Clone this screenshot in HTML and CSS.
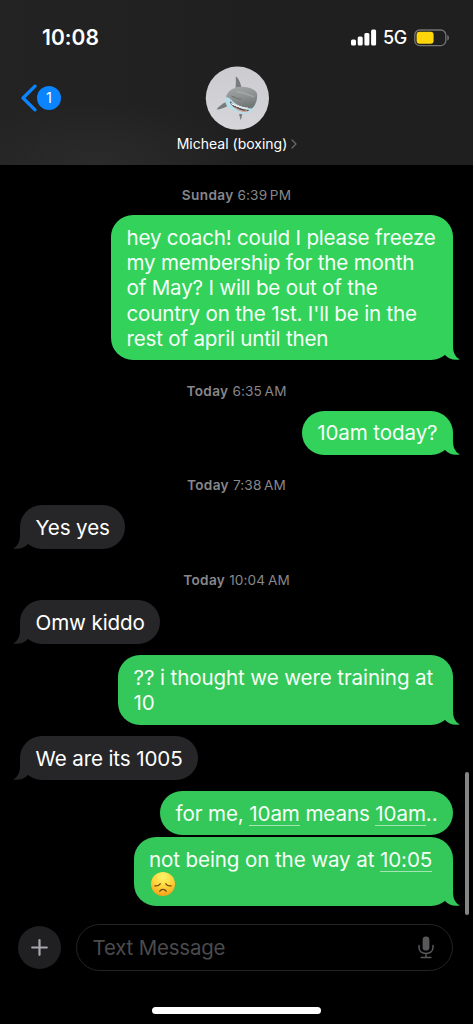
FILE: index.html
```html
<!DOCTYPE html>
<html lang="en">
<head>
<meta charset="utf-8">
<title>Messages</title>
<link rel="stylesheet" href="styles.css">
</head>
<body>
<svg class="defs" width="0" height="0">
  <symbol id="tail" viewBox="0 0 25 24"><path d="M6 8 L18 2 V10 C18 17 20.5 21.5 25 23.2 C19 25 13.5 22.5 10 19 Z"/></symbol>
</svg>
<div class="phone">
  <header class="header">
    <div class="status">
      <span class="clock">10:08</span>
      <div class="status-right">
        <svg class="signal" width="26" height="17" viewBox="0 0 26 17" fill="#fff"><rect x="0" y="10.5" width="5" height="6" rx="1.5"/><rect x="6.7" y="7.5" width="5" height="9" rx="1.5"/><rect x="13.4" y="4" width="5" height="12.5" rx="1.5"/><rect x="20.1" y="0.5" width="5" height="16" rx="1.5"/></svg>
        <span class="network">5G</span>
        <svg class="battery" width="36" height="18" viewBox="0 0 36 18"><rect x=".8" y="1" width="31" height="15.6" rx="5" fill="none" stroke="#737373" stroke-width="1.3"/><rect x="2.6" y="2.8" width="17" height="12" rx="3" fill="#ffd60a"/><path d="M33.3 6c2.2.8 2.2 4.8 0 5.6z" fill="#737373"/></svg>
      </div>
    </div>
    <div class="nav">
      <div class="back">
        <svg width="16" height="28" viewBox="0 0 16 28" fill="none" stroke="#0a84ff" stroke-width="3.3" stroke-linecap="round" stroke-linejoin="round"><path d="M14 2.2 2.1 14 14 25.8"/></svg>
        <span class="unread">1</span>
      </div>
      <div class="contact">
        <svg class="avatar" width="64" height="64" viewBox="0 0 64 64">
          <defs>
            <linearGradient id="bg" x2="0" y2="1"><stop stop-color="#cbcbd0"/><stop offset="1" stop-color="#d6d6da"/></linearGradient>
            <linearGradient id="skin" x2=".3" y2="1"><stop stop-color="#a5a8a9"/><stop offset=".6" stop-color="#8b8f8f"/><stop offset="1" stop-color="#727777"/></linearGradient>
          </defs>
          <circle cx="32.4" cy="32.2" r="31.6" fill="url(#bg)"/>
          <path d="M21 36 C17 38 13.5 40.5 11.5 43.5 C15 43.3 19 42 22 40.5 Z" fill="#777d7f"/>
          <path d="M34 48 L35.8 54.5 L37.3 48 Z" fill="#777d7f"/>
          <path d="M30.5 22 C31 18 31 13.5 30.7 10.5 C33.5 12 35.3 16 36.3 21 Z" fill="#777b7c"/>
          <path d="M20.5 33 C21 27 27 21.5 37 21 C45 21.5 52 24 52.2 28.5 C52.5 36 49 43 44.5 47 C36 49 24 44 20.5 37 Z" fill="#b5dee8"/>
          <path d="M21 31.5 C22 25 29 20.5 38 20.8 C45 21.3 52 24 52.2 28.5 C52.5 35 50 39.5 47 42.5 C38 42.5 31 39 26 33.5 C24 31.7 22.5 31 21 31.5 Z" fill="url(#skin)"/>
          <path d="M25 34.7 C30 40.5 37 43.3 44.5 44.2 C39 47.8 29 43 25.5 37.5 Z" fill="#5b4c50"/>
          <path d="M26.5 37 l1 1.5 1-.6 1 1.7 1.3-.6 1 1.6 1.5-.7 1.2 1.5 1.6-.8 1.2 1.3 1.7-.6 1.2 1 2.6-.5" fill="none" stroke="#f1efed" stroke-width="1.1"/>
          <path d="M30 41.7 C34 44.5 38 46 42 45" fill="none" stroke="#d7a699" stroke-width="1.3"/>
          <path d="M26.5 30 C30 31.5 33 33.5 36 33" fill="none" stroke="#666b6d" stroke-width=".9"/>
          <path d="M32 26 C38 26 44 29 49 31" fill="none" stroke="#bdbfbf" stroke-width="1.6" opacity=".45"/>
        </svg>
        <div class="name"><span>Micheal (boxing)</span><svg width="6" height="10" viewBox="0 0 6 10" fill="none" stroke="#68686c" stroke-width="1.3" stroke-linecap="round" stroke-linejoin="round"><path d="M1 1l4 4-4 4"/></svg></div>
      </div>
    </div>
  </header>

  <main class="thread">
    <div class="stamp first"><b>Sunday</b> 6:39&#8201;PM</div>
    <div class="bubble sent fresh long">hey coach! could I please freeze<br>my membership for the month<br>of May? I will be out of the<br>country on the 1st. I'll be in the<br>rest of april until then<svg class="tail"><use href="#tail"/></svg></div>
    <div class="stamp"><b>Today</b> 6:35&#8201;AM</div>
    <div class="bubble sent fresh">10am today?<svg class="tail"><use href="#tail"/></svg></div>
    <div class="stamp"><b>Today</b> 7:38&#8201;AM</div>
    <div class="bubble received">Yes yes<svg class="tail"><use href="#tail"/></svg></div>
    <div class="stamp"><b>Today</b> 10:04&#8201;AM</div>
    <div class="bubble received">Omw kiddo<svg class="tail"><use href="#tail"/></svg></div>
    <div class="bubble sent reply question">?? i thought we were training at<br>10<svg class="tail"><use href="#tail"/></svg></div>
    <div class="bubble received reply">We are its 1005<svg class="tail"><use href="#tail"/></svg></div>
    <div class="bubble sent reply">for me, <span class="link">10am</span> means <span class="link">10am</span>..</div>
    <div class="bubble sent grouped">not being on the way at <span class="link">10:05</span><br><svg class="emoji" width="26" height="26" viewBox="0 0 26 26"><defs><radialGradient id="face" cx=".5" cy=".2" r=".85"><stop stop-color="#fff36b"/><stop offset=".5" stop-color="#ffd43a"/><stop offset="1" stop-color="#f59a14"/></radialGradient></defs><circle cx="13" cy="13" r="12" fill="url(#face)"/><path d="M4.8 14.8c2.3.5 4.2-.2 5.4-2M21.2 14.8c-2.3.5-4.2-.2-5.4-2M9.8 20.2c1.5-2.5 4.9-2.5 6.4 0" fill="none" stroke="#76450d" stroke-width="1.3" stroke-linecap="round"/></svg><svg class="tail"><use href="#tail"/></svg></div>
    <div class="scrollbar"></div>
  </main>

  <footer class="composer">
    <div class="add"><svg width="17" height="17" viewBox="0 0 17 17" stroke="#a9a9ad" stroke-width="2.2" stroke-linecap="round"><path d="M8.5 1.2v14.6M1.2 8.5h14.6"/></svg></div>
    <div class="field"><span>Text Message</span><svg width="16" height="23" viewBox="0 0 16 23" fill="none" stroke="#58585b" stroke-width="1.5" stroke-linecap="round"><rect x="4.6" y=".6" width="6.8" height="14" rx="3.4" fill="#58585b" stroke="none"/><path d="M1 9.5v1.8c0 4 3 6.2 7 6.2s7-2.2 7-6.2V9.5M8 17.5v3.7M3.2 21.4h9.6"/></svg></div>
  </footer>
  <div class="home"></div>
</div>
</body>
</html>
```
FILE: styles.css
```css
* { box-sizing: border-box; }
body { margin: 0; background: #000; font-family: Inter, "Liberation Sans", sans-serif; }
.defs { position: absolute; }
.phone { width: 473px; height: 1024px; background: #000; overflow: hidden; display: flex; flex-direction: column; }
svg { display: block; flex: none; }

.header { height: 164.6px; flex: none; background: radial-gradient(ellipse 150px 65px at 95px 165px, #2b2b2b, transparent), linear-gradient(90deg, #232323, #1f1f1f 60%); }
.status { height: 66px; padding: 9px 23px 0 42px; display: flex; justify-content: space-between; align-items: center; color: #fff; }
.clock { font-size: 21px; font-weight: 600; letter-spacing: .05px; }
.status-right { display: flex; align-items: center; }
.network { font-size: 18px; font-weight: 500; margin: 0 7px 0 6px; letter-spacing: -.3px; }
.nav { display: grid; grid-template-columns: 1fr auto 1fr; padding: 0 20px 0 21px; }
.back { display: flex; align-items: center; align-self: start; margin-top: 18px; }
.unread { width: 24px; height: 24px; border-radius: 50%; background: #0a84ff; color: #fff; font-size: 14.5px; line-height: 24px; text-align: center; }
.contact { display: flex; flex-direction: column; align-items: center; }
.name { display: flex; align-items: center; gap: 4px; margin-top: 5px; color: #fff; font-size: 14px; line-height: 18px; letter-spacing: 0; }

.thread { position: relative; flex: none; height: 742px; display: flex; flex-direction: column; }
.stamp { height: 16px; margin: 22.5px 0 12px; line-height: 16px; text-align: center; color: #87878c; font-size: 13.6px; font-weight: 400; letter-spacing: .15px; }
.stamp b { font-weight: 600; letter-spacing: .35px; }
.bubble { position: relative; flex: none; padding: 9.9px 15.5px 9.1px; border-radius: 22px; font-size: 20.6px; line-height: 25.2px; letter-spacing: -.12px; color: #fff; white-space: nowrap; }
.sent { align-self: flex-end; margin-right: 20px; background: #34c759; color: #f5fff7; fill: #34c759; }
.fresh { background: #32d25b; fill: #32d25b; }
.long { width: 342px; letter-spacing: -.2px; }
.question { width: 335px; }
.grouped { width: 319.5px; }
.received { align-self: flex-start; margin-left: 20px; background: #262628; fill: #262628; }
.reply { margin-top: 11.2px; }
.grouped { margin-top: 1.2px; }
.tail { position: absolute; right: -7px; bottom: 0; width: 25px; height: 24px; }
.received .tail { right: auto; left: -7px; transform: scaleX(-1); }
.link { box-shadow: 0 1px 0 #a4e5b3; display: inline-block; height: 24px; }
.emoji { margin: -.5px 0 -.3px 1px; }
.scrollbar { position: absolute; right: 4px; top: 607px; width: 4px; height: 143px; border-radius: 2px; background: #858585; }

.composer { display: flex; align-items: center; margin-top: 17.6px; padding: 0 20px 0 17.5px; height: 47px; flex: none; }
.add { width: 43px; height: 43px; border-radius: 50%; background: #202022; display: flex; align-items: center; justify-content: center; }
.field { margin-left: 15px; flex: 1; height: 47px; border: 1.3px solid #242426; border-radius: 24px; display: flex; align-items: center; justify-content: space-between; padding: 0 18px 0 16px; font-size: 20.4px; letter-spacing: -.15px; color: #4b4b4e; }
.home { width: 169px; height: 7px; border-radius: 4px; background: #fff; margin: 36px 0 0 152px; flex: none; }
```
